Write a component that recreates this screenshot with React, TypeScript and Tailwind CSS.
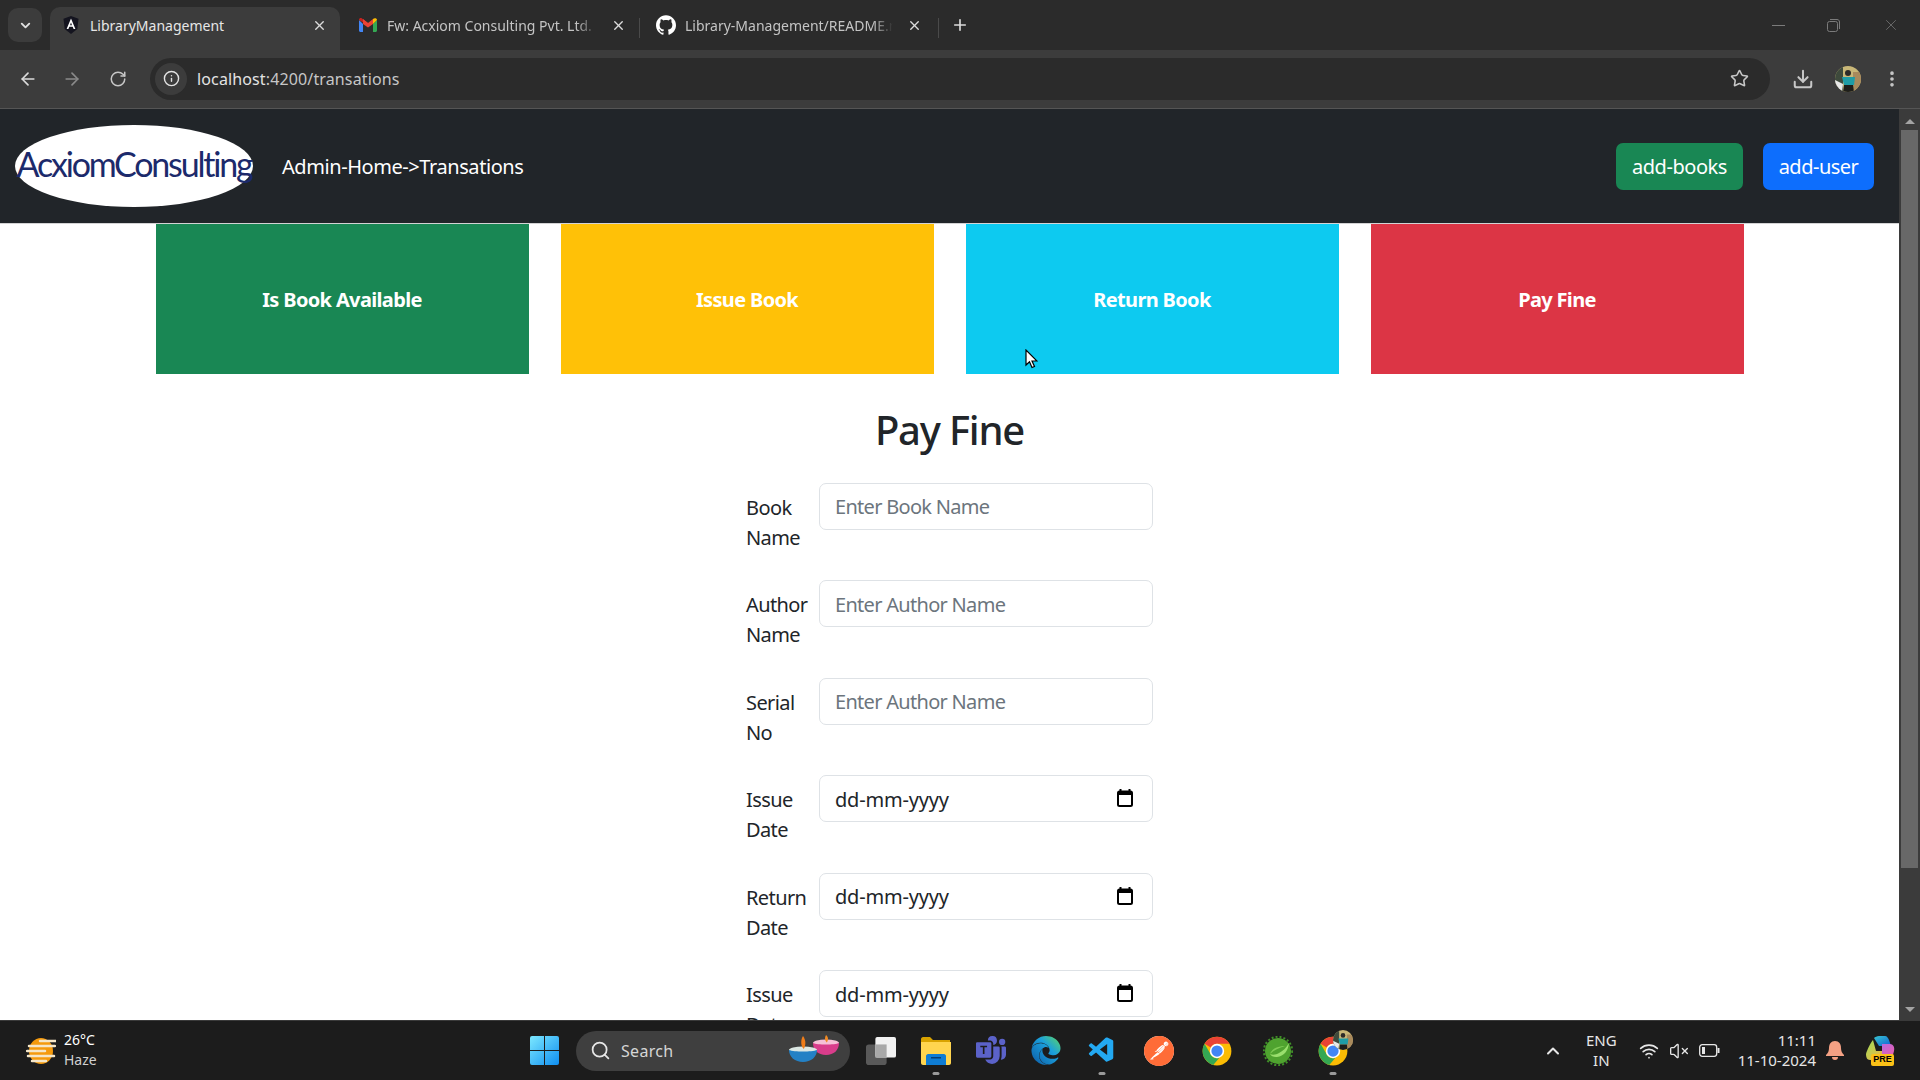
import { ArrowLeft, ArrowRight, ChevronDown, ChevronUp, Download, EllipsisVertical, Info, Plus, RotateCw, Search, Star, VolumeX, Wifi, X } from 'lucide-react'
import type { ReactNode } from 'react'
import { BsMicrosoftTeams } from 'react-icons/bs'
import { FaEdge } from 'react-icons/fa'
import { SiGithub, SiPostman } from 'react-icons/si'
import { VscVscode } from 'react-icons/vsc'

const AngularIcon = () => (
  <svg width="16" height="18" viewBox="0 0 16 18">
    <path d="M8 0 15.5 2.7 14.3 13 8 18 1.7 13 .5 2.7Z" fill="#14141f" />
    <path d="M8 2.5 3.6 13h1.8l.9-2.3h3.4l.9 2.3h1.8ZM7 9.2 8 6.6l1 2.6Z" fill="#fff" />
  </svg>
)

const GmailIcon = () => (
  <svg width="18" height="14" viewBox="0 0 18 14">
    <path d="M0 2v10.5C0 13.3.7 14 1.5 14H4V6Z" fill="#4285f4" />
    <path d="M14 6v8h2.5c.8 0 1.5-.7 1.5-1.5V2Z" fill="#34a853" />
    <path d="M0 2c0-2 2-2.500 3-1.500L9 5l0 3L4 4.500 0 2Z" fill="#c5221f" />
    <path d="M4 1 9 5l5-4v5L9 9.500 4 6Z" fill="#ea4335" />
    <path d="M14 1c1.500-1.300 4-.8 4 1L14 6Z" fill="#fbbc04" />
  </svg>
)

const Avatar = ({ size }: { size: number }) => (
  <svg width={size} height={size} viewBox="0 0 26 26">
    <clipPath id={`avatar-${size}`}>
      <circle cx="13" cy="13" r="13" />
    </clipPath>
    <g clipPath={`url(#avatar-${size})`}>
      <rect width="26" height="26" fill="#c9b778" />
      <rect y="0" width="8" height="26" fill="#3e4a3c" />
      <path d="M0 14 8 18 7 26H0Z" fill="#e8e8e8" />
      <path d="M18 6h8v20h-8Z" fill="#a98a5c" />
      <circle cx="13" cy="7" r="3" fill="#2c2a28" />
      <path d="M7 11h13l-1 8H9Z" fill="#1f9ca5" />
      <path d="M9 19h9l1 7H8Z" fill="#1e1e1a" />
    </g>
  </svg>
)

const ChromeIcon = ({ size = 30 }: { size?: number }) => (
  <svg width={size} height={size} viewBox="0 0 48 48">
    <circle cx="24" cy="24" r="23" fill="#fbbc04" />
    <path d="M24 1a23 23 0 0 1 19.9 11.500H24a11.500 11.500 0 0 0-10 5.800L4.100 12.500A23 23 0 0 1 24 1Z" fill="#ea4335" />
    <path d="M4.100 12.500 14 29.700A11.500 11.500 0 0 0 27.500 35L18 46.300A23 23 0 0 1 4.100 12.500Z" fill="#34a853" />
    <circle cx="24" cy="24" r="11.500" fill="#fff" />
    <circle cx="24" cy="24" r="9" fill="#4285f4" />
  </svg>
)

const SpringIcon = () => (
  <svg width="30" height="30" viewBox="0 0 30 30">
    <circle cx="15" cy="15" r="13" fill="#4fa32f" />
    <circle cx="15" cy="15" r="14.200" fill="none" stroke="#3f8f28" strokeWidth="2" strokeDasharray="2 2" />
    <path d="M26 7c-1 8-5 13-12 14-3 .4-6-1-7-3 2 1 6 1 9-1 4-2 7-5 10-10Z" fill="#9adf6d" />
    <path d="M7 18c2-6 9-8 15-8-6 2-11 4-15 8Z" fill="#7fcb55" />
  </svg>
)

const FilesIcon = () => (
  <svg width="30" height="28" viewBox="0 0 30 28">
    <path d="M0 2c0-1 1-2 2-2h7l3 3h17v23H0Z" fill="#d9a300" />
    <path d="M0 5h30v21c0 1-1 2-2 2H2c-1 0-2-1-2-2Z" fill="#ffd54f" />
    <path d="M5 19c0-1 1-2 2-2h16c1 0 2 1 2 2v9H5Z" fill="#0f7dd4" />
    <rect x="10" y="20" width="10" height="1.500" fill="#073f73" />
  </svg>
)

const DiyaIcons = () => (
  <svg width="50" height="27" viewBox="0 0 50 27">
    <ellipse cx="37" cy="8" rx="13" ry="3.500" fill="#f6c0d6" />
    <path d="M24 8c0 7 5 12 13 12s13-5 13-12c-4 2-22 2-26 0Z" fill="#d93d8b" />
    <path d="M37 0c2.500 2 2.500 5 .8 7.500C35.500 5.500 35.500 2.500 37 0Z" fill="#f08a24" />
    <ellipse cx="14" cy="15" rx="14" ry="3.500" fill="#dce7e3" />
    <path d="M0 15c0 7 6 12 14 12s14-5 14-12c-5 2-23 2-28 0Z" fill="#2481c5" />
    <path d="M14 1c3 4 3 9 .8 13C11.500 11 11.500 5 14 1Z" fill="#ef7d1a" />
  </svg>
)

const CopilotIcon = () => (
  <div className="relative h-[30px] w-[30px]">
    <svg width="30" height="24" viewBox="0 0 30 24">
      <defs>
        <linearGradient id="copilot-a" x1="0" y1="0" x2="1" y2="1">
          <stop offset="0" stopColor="#37c6d0" />
          <stop offset="1" stopColor="#0f5fd6" />
        </linearGradient>
        <linearGradient id="copilot-b" x1="0" y1="0" x2="1" y2="1">
          <stop offset="0" stopColor="#9edc5a" />
          <stop offset="1" stopColor="#f5b342" />
        </linearGradient>
        <linearGradient id="copilot-c" x1="0" y1="0" x2="1" y2="1">
          <stop offset="0" stopColor="#b06ae8" />
          <stop offset="1" stopColor="#f25ca2" />
        </linearGradient>
      </defs>
      <path d="M9 2c1-1 3-2 5-2h6c2 0 3 2 4 4l2 6H14Z" fill="url(#copilot-a)" />
      <path d="M8 4C6 6 2 14 1 18c0 3 1 6 4 6h8c3 0 4-2 5-5l1-4H11Z" fill="url(#copilot-b)" />
      <path d="M17 8h8c3 0 5 3 4 7-1 5-3 9-7 9h-9c3-1 3-3 4-6Z" fill="url(#copilot-c)" />
    </svg>
    <span className="absolute bottom-0 left-[6px] flex h-[12px] w-[23px] items-center justify-center rounded-[2px] bg-[#fbc117] font-['Liberation_Sans',sans-serif] text-[9px] leading-none font-bold text-black">PRE</span>
  </div>
)

const BrowserTab = ({ icon, title, active, fade, width, padding }: { icon: ReactNode; title: string; active?: boolean; fade?: boolean; width: string; padding: string }) => (
  <div className={`flex h-[43px] items-center pb-[7px] ${width} ${padding} ${active ? 'rounded-t-[10px] bg-[#3c3c3c]' : ''}`}>
    <div className="flex w-[20px] shrink-0 justify-center">{icon}</div>
    <span className={`ml-[9px] min-w-0 flex-1 overflow-hidden text-[14px] whitespace-nowrap ${active ? 'text-[#e6e6e6]' : 'text-[#c4c4c4]'} ${fade ? 'mask-r-from-90%' : ''}`}>{title}</span>
    <X size={15} className={`shrink-0 text-[#dcdcdc] ${fade ? 'ml-[14px]' : 'ml-2'}`} strokeWidth={2.2} />
  </div>
)

const FormRow = ({ label, placeholder, date }: { label: string; placeholder: string; date?: boolean }) => (
  <div className="flex h-[97.5px] items-start">
    <label className="w-[73px] shrink-0 pt-[10px] text-[20px] leading-[30px] tracking-[-0.6px] text-[#212529]">{label}</label>
    <div className="relative h-[47px] w-[334px] shrink-0">
      <input
        placeholder={placeholder}
        className={`h-full w-full rounded-[7px] border border-[#dee2e6] bg-white px-[15px] pt-[1px] text-[20px] outline-none ${date ? 'tracking-[-0.2px] placeholder:text-[#212529]' : 'tracking-[-0.7px] placeholder:text-[#6c757d]'}`}
      />
      {date && (
        <svg className="absolute top-[14px] right-[20px]" width="16" height="18" viewBox="0 0 16 18">
          <path d="M3.500 0v2.500M12.500 0v2.500" stroke="#000" strokeWidth="2" />
          <rect x="1" y="2.500" width="14" height="14.500" rx="1.500" fill="none" stroke="#000" strokeWidth="2" />
          <rect x="1" y="2.500" width="14" height="3.500" fill="#000" />
        </svg>
      )}
    </div>
  </div>
)

const TaskIcon = ({ children, running, className = '' }: { children: ReactNode; running?: boolean; className?: string }) => (
  <div className={`relative flex h-[30px] w-[30px] items-center justify-center ${className}`}>
    {children}
    {running && <span className="absolute -bottom-[9px] left-1/2 h-[3px] w-[7px] -translate-x-1/2 rounded-full bg-[#9a9a9a]" />}
  </div>
)

const rows = [
  { label: 'Book Name', placeholder: 'Enter Book Name' },
  { label: 'Author Name', placeholder: 'Enter Author Name' },
  { label: 'Serial No', placeholder: 'Enter Author Name' },
  { label: 'Issue Date', placeholder: 'dd-mm-yyyy', date: true },
  { label: 'Return Date', placeholder: 'dd-mm-yyyy', date: true },
  { label: 'Issue Date', placeholder: 'dd-mm-yyyy', date: true },
]

const cards = [
  { title: 'Is Book Available', color: 'bg-[#198754]' },
  { title: 'Issue Book', color: 'bg-[#ffc107]' },
  { title: 'Return Book', color: 'bg-[#0dcaf0]' },
  { title: 'Pay Fine', color: 'bg-[#dc3545]' },
]

export default function App() {
  return (
    <div className="relative flex h-screen w-full flex-col overflow-hidden bg-white font-['Noto_Sans',sans-serif]">
      {/* Tab strip */}
      <div className="flex h-[50px] shrink-0 items-end bg-[#2b2b2b] pl-[8px]">
        <div className="mb-[8px] flex h-[34px] w-[34px] items-center justify-center rounded-[10px] bg-[#3c3c3c]">
          <ChevronDown size={15} strokeWidth={3} className="text-[#e0e0e0]" />
        </div>
        <div className="ml-[8px] flex items-end">
          <BrowserTab active icon={<AngularIcon />} title="LibraryManagement" width="w-[290px]" padding="pr-[13px] pl-[11px]" />
          <BrowserTab icon={<GmailIcon />} title="Fw: Acxiom Consulting Pvt. Ltd." fade width="w-[299px]" padding="pr-[13px] pl-[18px]" />
          <div className="mb-[12px] h-[20px] w-px shrink-0 bg-[#4a4a4a]" />
          <BrowserTab icon={<SiGithub size={20} className="text-white" />} title="Library-Management/README.md" fade width="w-[298px]" padding="pr-[16px] pl-[16px]" />
          <div className="mb-[12px] h-[20px] w-px shrink-0 bg-[#4a4a4a]" />
          <Plus size={18} strokeWidth={2.2} className="mb-[16px] ml-[12px] text-[#dcdcdc]" />
        </div>
        <div className="mb-[16px] ml-auto flex items-center text-[#7b7b7b]">
          <span className="h-px w-[13px] bg-[#7b7b7b]" />
          <svg className="ml-[42px]" width="13" height="13" viewBox="0 0 13 13" fill="none" stroke="#7b7b7b">
            <rect x=".5" y="2.500" width="10" height="10" rx="2" />
            <path d="M3 .5h7c1.500 0 2.500 1 2.500 2.500v7" />
          </svg>
          <X size={18} strokeWidth={1} className="mr-[20px] ml-[42px]" />
        </div>
      </div>

      {/* Toolbar */}
      <div className="flex h-[59px] shrink-0 items-center border-b border-[#555555] bg-[#3c3c3c] pb-[1px] text-[#c7c7c7]">
        <ArrowLeft size={20} className="ml-[18px] text-[#dadada]" />
        <ArrowRight size={20} className="ml-[24px] text-[#8a8a8a]" />
        <RotateCw size={18} className="ml-[27px]" />
        <div className="ml-[23px] flex h-[42px] w-[1620px] items-center rounded-full bg-[#2b2b2b] pr-[21px] pl-[5px]">
          <div className="flex h-[32px] w-[32px] items-center justify-center rounded-full bg-[#3c3c3c]">
            <Info size={17} className="text-[#e3e3e3]" />
          </div>
          <span className="ml-[10px] pt-[1px] text-[16px] tracking-[0.13px] text-[#e3e3e3]">
            localhost<span className="text-[#c7c7c7]">:4200/transations</span>
          </span>
          <Star size={19} strokeWidth={2} className="ml-auto" />
        </div>
        <Download size={22} strokeWidth={2.2} className="ml-[22px]" />
        <div className="ml-[21px] flex"><Avatar size={26} /></div>
        <EllipsisVertical size={20} strokeWidth={2.4} className="ml-[21px]" />
      </div>

      {/* Page and scrollbar */}
      <div className="flex min-h-0 flex-1">
        <div className="min-w-0 flex-1 overflow-hidden">
          <nav className="flex h-[115px] items-center border-b border-white/80 bg-[#212529] pr-[25px] pl-[15px]">
            <div className="flex h-[82px] w-[238px] items-center justify-center rounded-[50%] bg-white pb-[6px] font-['Lato',sans-serif] text-[34px] tracking-[-2.2px] whitespace-nowrap text-[#1c2a6b]">
              AcxiomConsulting
            </div>
            <span className="ml-[29px] pt-[1px] text-[20px] tracking-[-0.43px] text-white">Admin-Home-&gt;Transations</span>
            <button className="ml-auto h-[47px] w-[127px] rounded-[7px] bg-[#198754] pt-[1px] text-[20px] tracking-[-0.45px] text-white">add-books</button>
            <button className="ml-[20px] h-[47px] w-[111px] rounded-[7px] bg-[#0d6efd] pt-[1px] text-[20px] tracking-[-0.5px] text-white">add-user</button>
          </nav>
          <div className="mx-auto grid w-[1588px] grid-cols-4 gap-8">
            {cards.map((card) => (
              <div key={card.title} className={`flex h-[150px] items-center justify-center pt-[1px] text-[20px] font-bold tracking-[-0.65px] text-white ${card.color}`}>
                {card.title}
              </div>
            ))}
          </div>
          <h2 className="flex h-[108.75px] items-center justify-center pt-[4px] text-[40px] font-medium tracking-[-1.2px] text-[#212529]">Pay Fine</h2>
          <form className="mx-auto w-[407px]">
            {rows.map((row, i) => (
              <FormRow key={i} {...row} />
            ))}
          </form>
        </div>
        <div className="flex w-[21px] shrink-0 flex-col items-center bg-[#3b3b3b] pt-[10px]">
          <span className="h-0 w-0 border-x-[5px] border-b-[5px] border-x-transparent border-b-[#a3a3a3]" />
          <div className="mt-[6px] h-[738px] w-[17px] bg-[#686868]" />
          <span className="mt-auto mb-[8px] h-0 w-0 border-x-[5px] border-t-[5px] border-x-transparent border-t-[#a3a3a3]" />
        </div>
      </div>

      {/* Taskbar */}
      <div className="relative flex h-[60px] shrink-0 items-center border-t border-[#3a3a3a] bg-[#1c1c1c] text-white">
        <div className="flex w-[530px] shrink-0 items-center pl-[26px]">
          <svg width="30" height="26" viewBox="0 0 30 26">
            <ellipse cx="15" cy="13" rx="12" ry="13" fill="#f59a0c" />
            <path d="M14 3h16M3 8h26M1 13h18M2 18h26M6 23h14" stroke="#f5e6c8" strokeWidth="2.500" strokeLinecap="round" />
          </svg>
          <div className="mb-[2px] ml-[8px] text-[14px] leading-[20px]">
            <div>26°C</div>
            <div className="text-[#d0d0d0]">Haze</div>
          </div>
        </div>
        <svg width="29" height="29" viewBox="0 0 29 29">
          <defs>
            <linearGradient id="win" x1="0" y1="0" x2="1" y2="1">
              <stop offset="0" stopColor="#7ce8ff" />
              <stop offset="1" stopColor="#0f8ef0" />
            </linearGradient>
          </defs>
          <path d="M0 2a2 2 0 0 1 2-2h12v14H0ZM15 0h12a2 2 0 0 1 2 2v12H15ZM0 15h14v14H2a2 2 0 0 1-2-2ZM15 15h14v12a2 2 0 0 1-2 2H15Z" fill="url(#win)" />
        </svg>
        <div className="ml-[17px] flex h-[40px] w-[274px] items-center rounded-full bg-[#3f3f3f] pl-[14px]">
          <Search size={21} strokeWidth={2} className="text-[#e6e6e6]" />
          <span className="ml-[10px] text-[16px] tracking-[0.3px] text-[#d6d6d6]">Search</span>
          <div className="mr-[11px] mb-[5px] ml-auto flex"><DiyaIcons /></div>
        </div>
        <div className="ml-[16px] flex items-center">
          <TaskIcon>
            <svg width="32" height="30" viewBox="0 0 32 30">
              <rect y="8" width="22" height="22" rx="3" fill="#595959" />
              <rect x="10" y="0" width="22" height="22" rx="2" fill="#f2f2f2" />
              <rect x="10" y="8" width="12" height="14" fill="#a9a9a9" />
            </svg>
          </TaskIcon>
          <TaskIcon running className="ml-[25px]"><FilesIcon /></TaskIcon>
          <TaskIcon className="ml-[25px]"><BsMicrosoftTeams size={30} className="text-[#5b62c9]" /></TaskIcon>
          <TaskIcon className="ml-[25px]">
            <svg width="0" height="0" className="absolute">
              <defs>
                <linearGradient id="edge" x1="0" y1="1" x2="1" y2="0">
                  <stop offset="0" stopColor="#0c59a4" />
                  <stop offset="0.6" stopColor="#1ba0dc" />
                  <stop offset="1" stopColor="#5fd860" />
                </linearGradient>
              </defs>
            </svg>
            <FaEdge size={31} fill="url(#edge)" />
          </TaskIcon>
          <TaskIcon running className="ml-[26px]"><VscVscode size={31} className="text-[#23a9f2]" /></TaskIcon>
          <TaskIcon className="ml-[27px]">
            <span className="relative flex h-[30px] w-[30px] items-center justify-center rounded-full bg-white">
              <SiPostman size={30} className="text-[#ff6c37]" />
            </span>
          </TaskIcon>
          <TaskIcon className="ml-[28px]"><ChromeIcon /></TaskIcon>
          <TaskIcon className="ml-[31px]"><SpringIcon /></TaskIcon>
          <TaskIcon running className="ml-[25px]">
            <ChromeIcon />
            <span className="absolute -top-[6px] -right-[5px] flex"><Avatar size={20} /></span>
          </TaskIcon>
        </div>
        <div className="ml-auto flex items-center pr-[25px]">
          <ChevronUp size={20} strokeWidth={2.4} className="text-[#e6e6e6]" />
          <div className="mb-[2px] ml-[23px] text-center text-[15px] leading-[20px] text-[#e6e6e6]">
            <div>ENG</div>
            <div>IN</div>
          </div>
          <Wifi size={20} className="ml-[22px] text-[#e6e6e6]" />
          <VolumeX size={20} strokeWidth={1.6} className="ml-[10px] text-[#e6e6e6]" />
          <svg className="ml-[10px]" width="21" height="13" viewBox="0 0 21 13" fill="none" stroke="#e6e6e6">
            <rect x=".7" y=".7" width="17" height="11.600" rx="2.500" strokeWidth="1.300" />
            <rect x="3" y="3" width="3" height="7" fill="#e6e6e6" stroke="none" />
            <rect x="18.500" y="4" width="2" height="5" fill="#e6e6e6" stroke="none" />
          </svg>
          <div className="mb-[2px] ml-[18px] text-right text-[15px] leading-[20px] text-[#e6e6e6]">
            <div>11:11</div>
            <div>11-10-2024</div>
          </div>
          <svg className="ml-[10px]" width="18" height="20" viewBox="0 0 18 20">
            <path d="M9 0c4 0 6 3 6 7 0 3 1 5 3 7v1H0v-1c2-2 3-4 3-7 0-4 2-7 6-7ZM6 16h6c0 2-1 3-3 3s-3-1-3-3Z" fill="#f4a184" />
          </svg>
          <div className="ml-[21px]"><CopilotIcon /></div>
        </div>
      </div>

      {/* Mouse pointer */}
      <svg className="absolute top-[349px] left-[1025px]" width="13" height="20" viewBox="0 0 13 20">
        <path d="M1 1v15l3.500-3.300L7 18.500l2.500-1-2.500-5.500h5Z" fill="#fff" stroke="#000" strokeWidth="1.200" />
      </svg>
    </div>
  )
}
